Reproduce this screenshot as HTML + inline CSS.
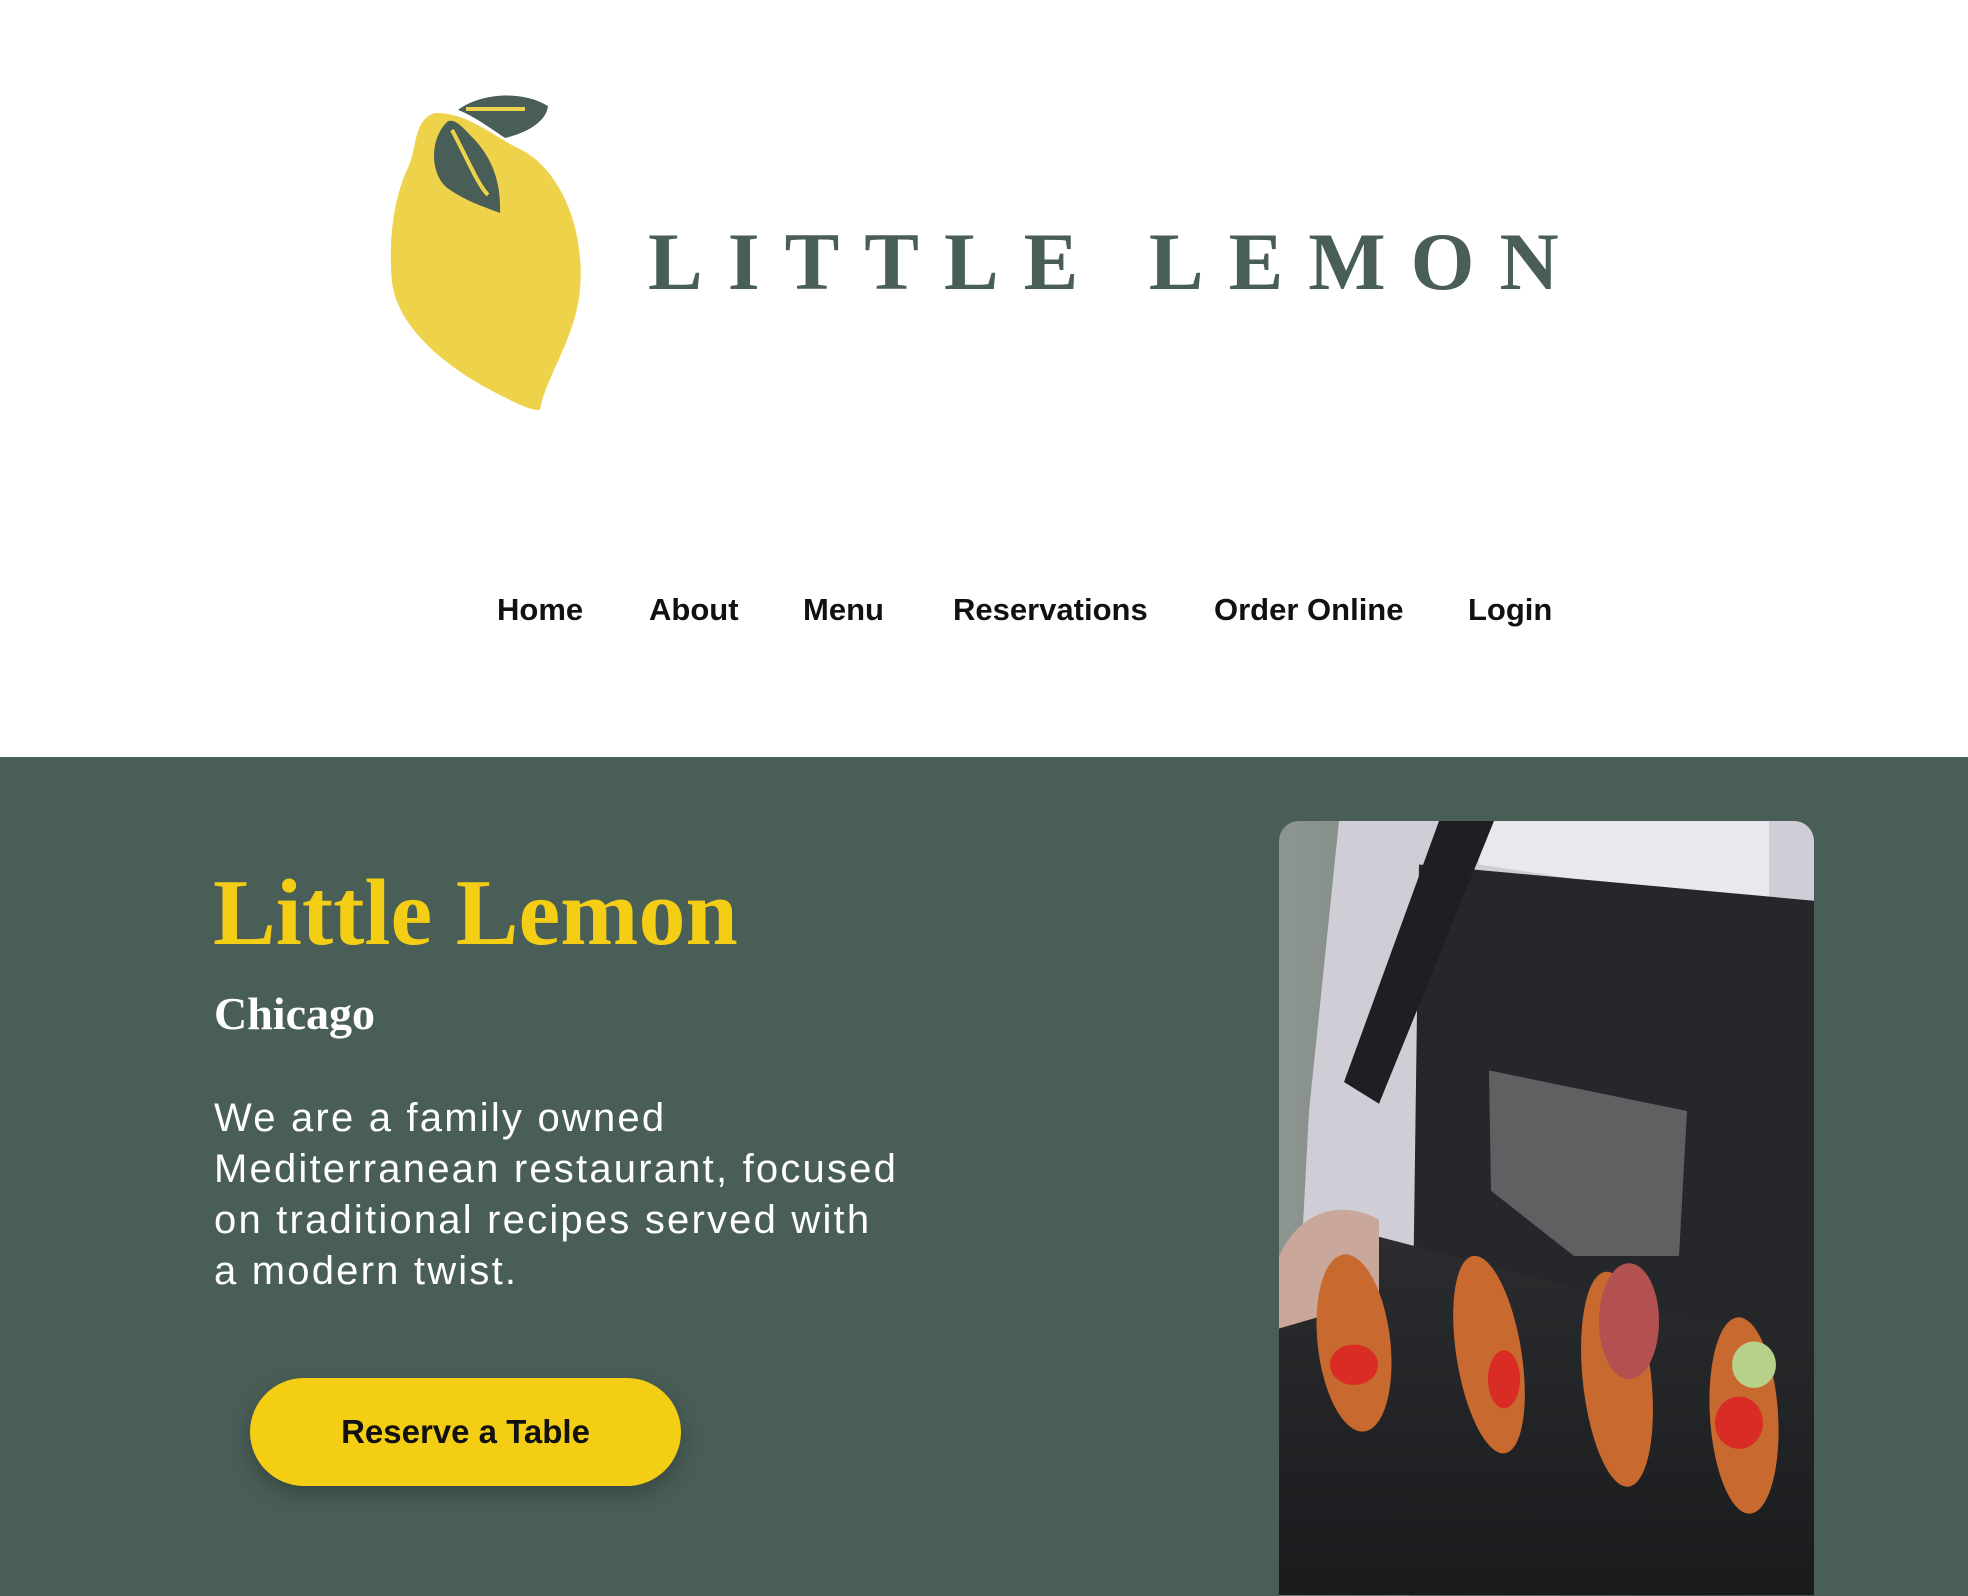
<!DOCTYPE html>
<html><head><meta charset="utf-8"><style>
*{margin:0;padding:0;box-sizing:border-box}
html,body{width:1968px;height:1596px;overflow:hidden;background:#fff;font-family:"Liberation Sans",sans-serif}
.logo{position:absolute;left:0;top:0}
.brand{position:absolute;left:648px;top:221px;font-family:"Liberation Serif",serif;font-weight:bold;font-size:82px;letter-spacing:25px;color:#495e57;line-height:1;white-space:nowrap}
.nav a{position:absolute;top:592px;font-weight:bold;font-size:31px;color:#111;text-decoration:none;white-space:nowrap}
.hero{position:absolute;left:0;top:757px;width:1968px;height:839px;background:#495e57}
h1{position:absolute;left:213px;top:866px;font-family:"Liberation Serif",serif;font-weight:bold;font-size:94px;color:#f4ce14;line-height:1;white-space:nowrap}
h2{position:absolute;left:214px;top:991px;font-family:"Liberation Serif",serif;font-weight:bold;font-size:46px;color:#fff;line-height:1}
p{position:absolute;left:214px;top:1093px;width:1000px;font-size:40px;letter-spacing:2.2px;line-height:51px;color:#fff;white-space:nowrap}
.btn{position:absolute;left:250px;top:1378px;width:431px;height:108px;border-radius:54px;background:#f4ce14;color:#111;font-weight:bold;font-size:33px;display:flex;align-items:center;justify-content:center;box-shadow:0 8px 20px rgba(0,0,0,.25)}
.img{position:absolute;left:1279px;top:821px;width:535px;height:775px;border-radius:20px 20px 0 0;overflow:hidden}
.img svg{display:block}
</style></head><body>
<svg class="logo" width="620" height="430" viewBox="0 0 620 430">
<path d="M435,113 C412,120 418,150 406,172 C394,200 388,240 392,282 C398,330 450,370 500,395 C520,405 530,410 540,410 C545,378 575,340 580,290 C585,230 562,172 522,150 C495,138 468,112 435,113 Z" fill="#eed24a"/>
<path d="M446,123 C430,140 430,172 446,187 C466,202 488,208 500,213 C501,185 494,158 470,135 C460,124 452,117 446,123 Z" fill="#495e57"/>
<path d="M452,130 C468,160 478,185 488,195" stroke="#eed24a" stroke-width="4" fill="none"/>
<path d="M458,110 C480,93 522,90 548,106 C546,124 522,134 505,138 C490,128 474,116 458,110 Z" fill="#495e57"/>
<path d="M466,109 L525,109" stroke="#eed24a" stroke-width="4"/>
</svg>
<div class="brand">LITTLE LEMON</div>
<div class="nav">
<a style="left:497px">Home</a><a style="left:649px">About</a><a style="left:803px">Menu</a><a style="left:953px">Reservations</a><a style="left:1214px">Order Online</a><a style="left:1468px">Login</a>
</div>
<div class="hero"></div>
<h1>Little Lemon</h1>
<h2>Chicago</h2>
<p>We are a family owned<br>Mediterranean restaurant, focused<br>on traditional recipes served with<br>a modern twist.</p>
<div class="btn">Reserve a Table</div>
<div class="img">
<svg width="535" height="775" viewBox="0 0 535 775">
<defs><linearGradient id="bg" x1="0" x2="1"><stop offset="0" stop-color="#8d9590"/><stop offset="1" stop-color="#5d6360"/></linearGradient>
<linearGradient id="sl" x1="0" y1="0" x2="0" y2="1"><stop offset="0" stop-color="#2a2c2f"/><stop offset="1" stop-color="#1a1b1d"/></linearGradient></defs>
<rect width="535" height="775" fill="url(#bg)"/>
<g transform="scale(1 1.45)">
<path d="M60,0 L535,0 L535,330 L20,330 L30,200 Z" fill="#cfcdd6"/>
<path d="M200,0 L490,0 L490,60 L200,30 Z" fill="#e8e8ee"/>
<path d="M140,30 L535,55 L535,534 L130,534 Z" fill="#25272b"/>
<path d="M160,0 L215,0 L100,195 L65,180 Z" fill="#1e1f22"/>
<path d="M210,172 L408,200 L400,300 L295,300 L212,255 Z" fill="#5f6062"/>
<path d="M0,330 L90,285 L535,365 L535,534 L0,534 Z" fill="url(#sl)"/>
<path d="M0,300 C20,270 60,260 100,275 L100,330 L0,350 Z" fill="#c9a79a"/>
<g fill="#c86a30">
<ellipse cx="75" cy="360" rx="36" ry="62" transform="rotate(-12 75 360)"/>
<ellipse cx="210" cy="368" rx="32" ry="70" transform="rotate(-15 210 368)"/>
<ellipse cx="338" cy="385" rx="34" ry="75" transform="rotate(-10 338 385)"/>
<ellipse cx="465" cy="410" rx="34" ry="68" transform="rotate(-6 465 410)"/>
</g>
<g fill="#d82c24">
<ellipse cx="75" cy="375" rx="24" ry="14"/>
<ellipse cx="225" cy="385" rx="16" ry="20"/>
<ellipse cx="350" cy="345" rx="30" ry="40" fill="#b35050"/>
<ellipse cx="460" cy="415" rx="24" ry="18"/>
</g>
<ellipse cx="475" cy="375" rx="22" ry="16" fill="#b7d08a"/>
</g>
</svg>
</div>
</body></html>
